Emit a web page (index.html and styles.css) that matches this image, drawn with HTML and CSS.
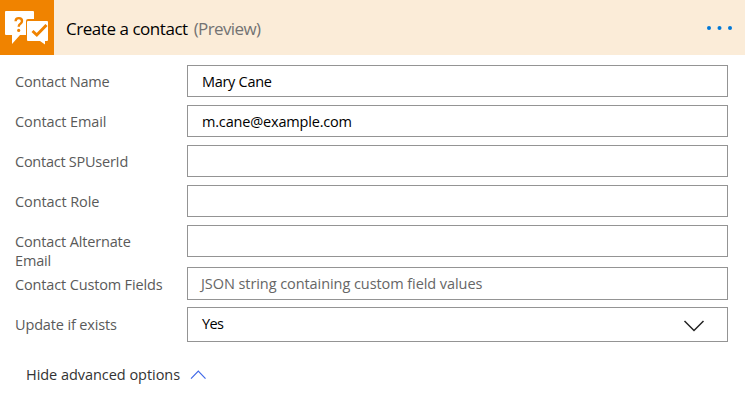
FILE: index.html
```html
<!DOCTYPE html>
<html lang="en">
<head>
<meta charset="utf-8">
<title>Create a contact</title>
<link rel="stylesheet" href="styles.css">
</head>
<body>
<section class="card">
  <header class="head">
    <div class="logo">
      <svg width="54" height="55" viewBox="0 0 54 55">
        <path fill="#fff" d="M6 11h27q1 0 1 1v7h-6q-2 0-2 2v14h-6l-8 9v-9H6q-1 0-1-1V12q0-1 1-1z"/>
        <path fill="#fff" d="M28 21h19q1 0 1 1v18q0 1-1 1h-2v3.500l-5-3.500H28q-1 0-1-1V22q0-1 1-1z"/>
        <path fill="none" stroke="#f08300" stroke-width="2.4" d="M15.600 21.200q0-3.100 3.200-3.100t3.200 2.800q0 1.800-1.600 2.800-1.700 1-1.700 3.100"/>
        <circle cx="18.700" cy="30.400" r="1.600" fill="#f08300"/>
        <path fill="none" stroke="#f08300" stroke-width="3" d="M32.500 31l4.300 4L46.500 25"/>
      </svg>
    </div>
    <h1 class="title"><span class="name">Create a contact</span> <span class="preview">(Preview)</span></h1>
    <svg class="more" width="28" height="6" viewBox="0 0 28 6" fill="#0078d7"><circle cx="3" cy="3" r="2"/><circle cx="13.5" cy="3" r="2"/><circle cx="24" cy="3" r="2"/></svg>
  </header>
  <div class="fields">
    <div class="row"><span class="label l-name">Contact Name</span><div class="box v-name">Mary Cane</div></div>
    <div class="row"><span class="label l-email">Contact Email</span><div class="box v-email">m.cane@example.com</div></div>
    <div class="row"><span class="label l-user">Contact SPUserId</span><div class="box"></div></div>
    <div class="row"><span class="label l-role">Contact Role</span><div class="box"></div></div>
    <div class="row two-line"><span class="label l-alt">Contact Alternate Email</span><div class="box"></div></div>
    <div class="row custom"><span class="label l-custom">Contact Custom Fields</span><div class="box hint">JSON string containing custom field values</div></div>
    <div class="row update"><span class="label l-update">Update if exists</span><div class="box select"><span class="choice">Yes</span>
      <svg width="22" height="12" viewBox="0 0 22 12" fill="none" stroke="#222" stroke-width="1.5"><path d="M1.500 1l9.500 9.500L20.500 1"/></svg></div></div>
  </div>
  <div class="advanced"><span>Hide advanced options</span>
    <svg width="16" height="10" viewBox="0 0 16 10" fill="none" stroke="#4169e8" stroke-width="1.200"><path d="M1 8.700L8.300 1.200 15.500 8.700"/></svg>
  </div>
</section>
</body>
</html>
```
FILE: styles.css
```css
* { box-sizing: border-box; }
body { margin: 0; background: #fff; color: #000; font: 14.5px/19px "Open Sans", "Noto Sans", sans-serif; letter-spacing: -0.3px; }
.card { width: 745px; height: 411px; overflow: hidden; }
.head { display: flex; align-items: center; height: 55px; background: #fbecd8; }
.logo { width: 54px; height: 55px; background: #f08300; }
.logo svg { display: block; }
.title { flex: 1; margin: 2px 0 0 12px; font-size: 17px; line-height: 24px; font-weight: 400; letter-spacing: -0.46px; }
.preview { color: #737373; margin-left: 2px; letter-spacing: -0.62px; }
.more { margin-right: 11px; }
.fields { display: flex; flex-direction: column; padding: 10px 17px 0 15px; }
.row { display: flex; align-items: flex-start; height: 40px; }
.two-line { height: 42px; }
.label { width: 172px; padding: 7px 30px 0 0; color: #5a5a5a; flex: none; white-space: nowrap; letter-spacing: -0.15px; }
.l-email { letter-spacing: -0.1px; }
.l-role { letter-spacing: -0.08px; }
.l-user { letter-spacing: -0.25px; }
.l-alt { white-space: normal; }
.box { flex: 1; height: 32px; border: 1px solid #949494; padding: 0 14px; line-height: 31px; white-space: nowrap; }
.v-email { letter-spacing: -0.18px; }
.custom .label { padding-top: 8px; }
.custom .box { height: 33px; }
.hint { color: #666; padding-left: 13px; letter-spacing: -0.07px; }
.select { display: flex; align-items: center; justify-content: space-between; height: 35px; padding-right: 22px; }
.choice { margin-top: -2px; letter-spacing: -0.6px; }
.update .label { padding-top: 8px; }
.select svg { margin-top: 2px; }
.advanced { display: flex; align-items: center; gap: 10px; padding: 18px 0 0 26px; color: #333; letter-spacing: -0.04px; }
```
